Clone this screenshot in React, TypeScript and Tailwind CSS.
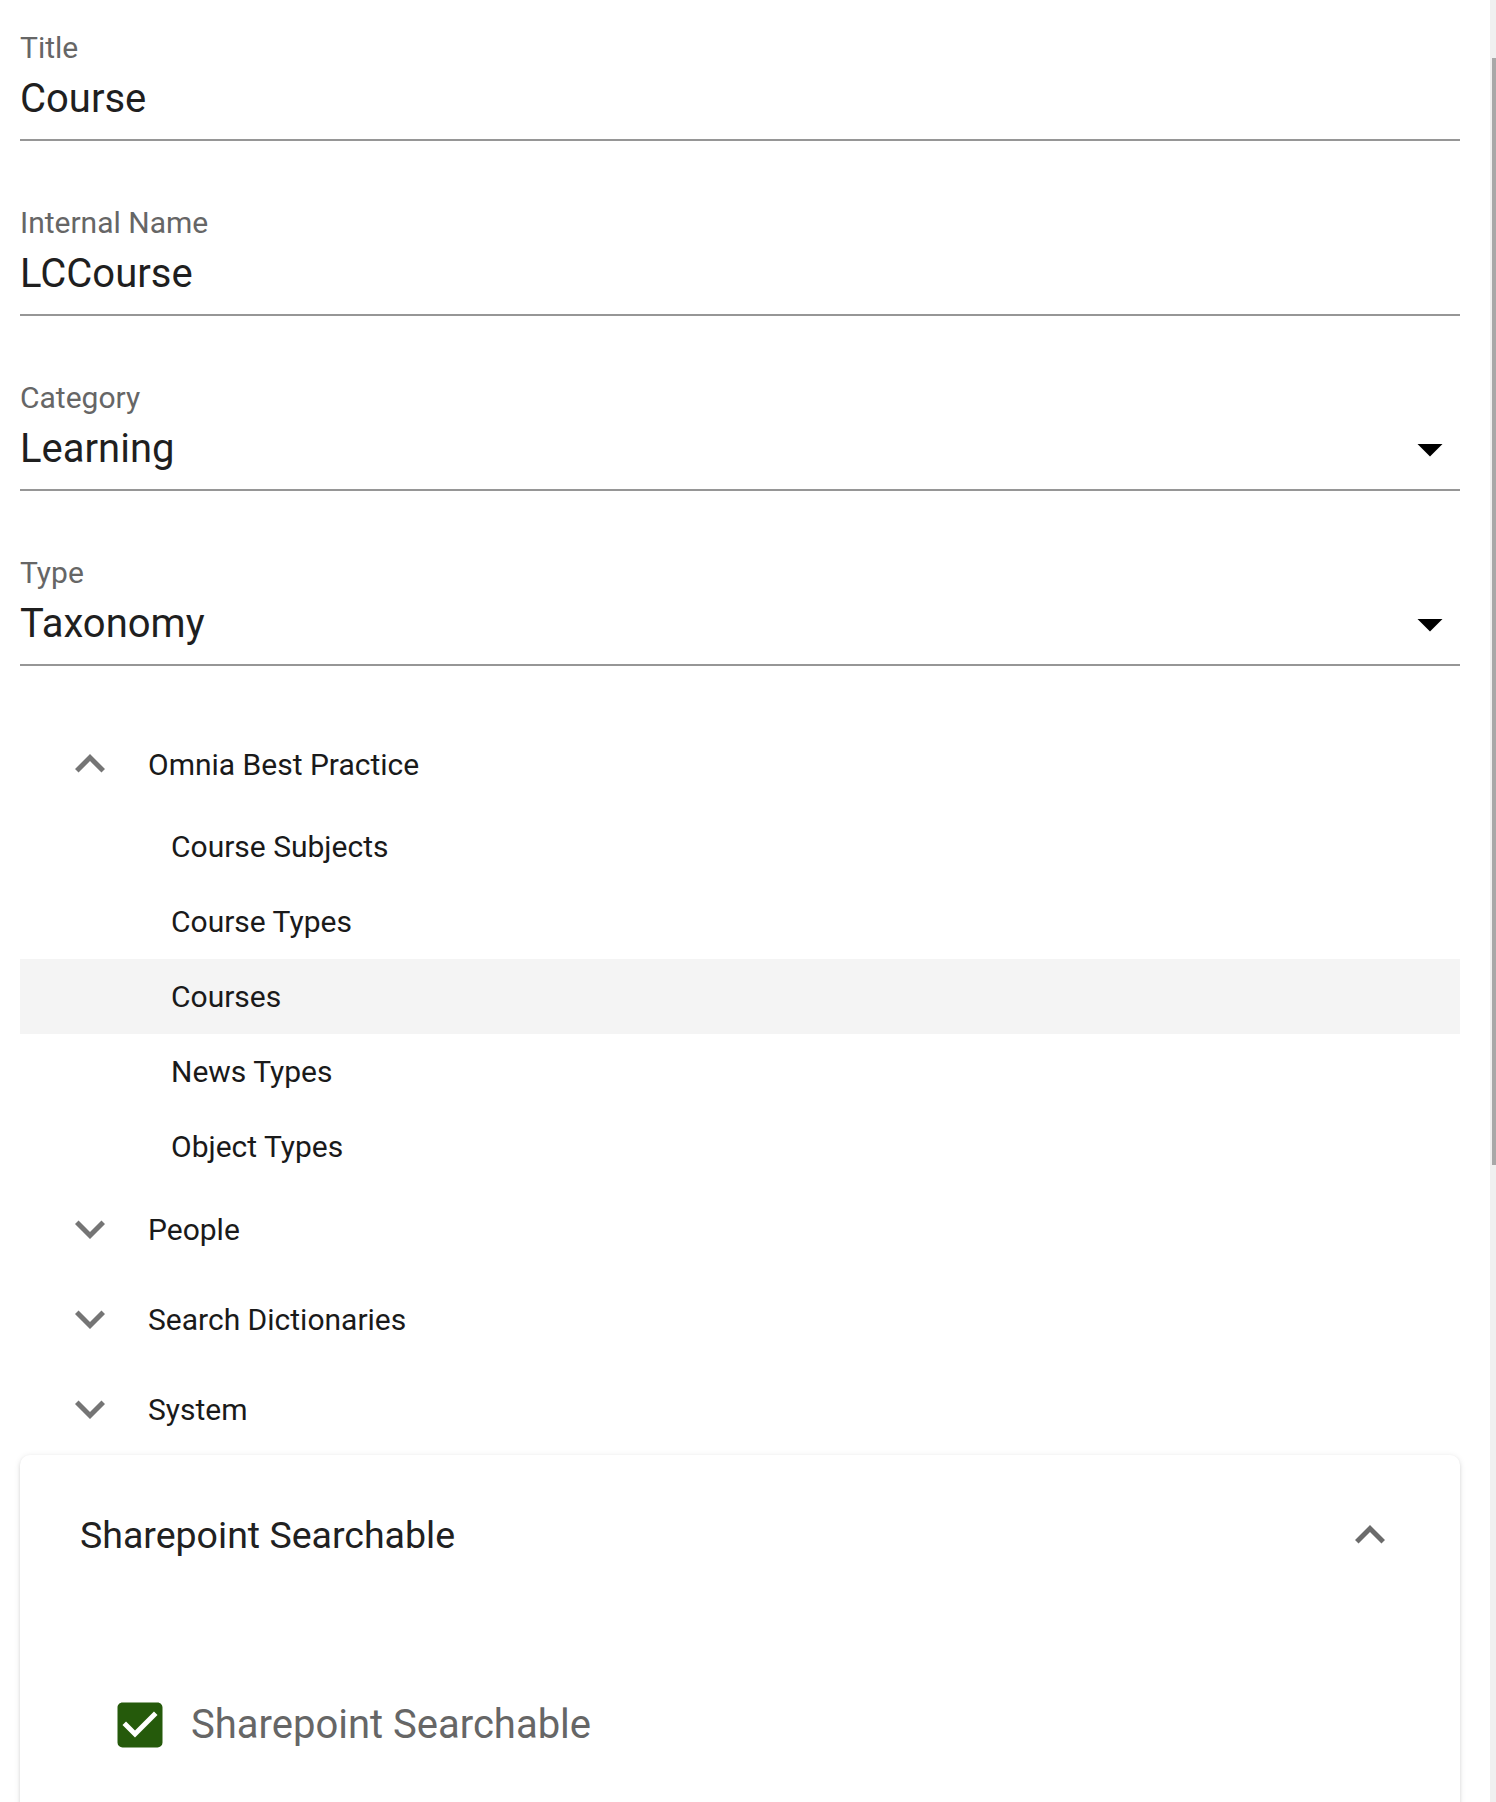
import React from "react";

const CHEVRON_UP = "M7.41,15.41L12,10.83L16.59,15.41L18,14L12,8L6,14L7.41,15.41Z";
const CHEVRON_DOWN = "M7.41,8.58L12,13.17L16.59,8.58L18,10L12,16L6,10L7.41,8.58Z";
const MENU_DOWN = "M7,10L12,15L17,10H7Z";
const CHECKBOX =
  "M10,17L5,12L6.41,10.58L10,14.17L17.59,6.58L19,8M19,3H5C3.89,3 3,3.89 3,5V19A2,2 0 0,0 5,21H19A2,2 0 0,0 21,19V5C21,3.89 20.1,3 19,3Z";

function Icon({ d, color, className }: { d: string; color: string; className?: string }) {
  return (
    <svg viewBox="0 0 24 24" width={60} height={60} className={className}>
      <path d={d} fill={color} />
    </svg>
  );
}

function Field({ label, value, select }: { label: string; value: string; select?: boolean }) {
  return (
    <div className="h-[175px] pt-[30px] flex flex-col">
      <div className="h-[36px] leading-[36px] text-[30px] text-[#666666]">{label}</div>
      <div className="mt-[9px] h-[48px] flex items-center justify-between">
        <span className="leading-[48px] text-[40px] text-[#1f1f1f]">{value}</span>
        {select && <Icon d={MENU_DOWN} color="#000000" className="shrink-0" />}
      </div>
      <div className="mt-[16px] h-[2px] bg-[#969696]" />
    </div>
  );
}

function ParentRow({ label, open }: { label: string; open?: boolean }) {
  return (
    <div className="h-[90px] flex items-center pl-[40px]">
      <Icon d={open ? CHEVRON_UP : CHEVRON_DOWN} color="#757575" className="shrink-0" />
      <span className="ml-[28px] text-[30px] text-[#1a1a1a]">{label}</span>
    </div>
  );
}

function ChildRow({ label, active }: { label: string; active?: boolean }) {
  return (
    <div className={"h-[75px] flex items-center pl-[151px] " + (active ? "bg-[#f4f4f4]" : "")}>
      <span className="text-[30px] text-[#1a1a1a]">{label}</span>
    </div>
  );
}

export default function App() {
  return (
    <div
      className="w-[1496px] h-[1802px] overflow-hidden bg-white flex"
      style={{ fontFamily: "Roboto, 'Noto Sans', sans-serif" }}
    >
      <div className="w-[1490px] pl-[20px] pr-[30px]">
        <Field label="Title" value="Course" />
        <Field label="Internal Name" value="LCCourse" />
        <Field label="Category" value="Learning" select />
        <Field label="Type" value="Taxonomy" select />

        <div className="mt-[19px]">
          <ParentRow label="Omnia Best Practice" open />
          <ChildRow label="Course Subjects" />
          <ChildRow label="Course Types" />
          <ChildRow label="Courses" active />
          <ChildRow label="News Types" />
          <ChildRow label="Object Types" />
          <ParentRow label="People" />
          <ParentRow label="Search Dictionaries" />
          <ParentRow label="System" />
        </div>

        <div className="mt-[1px] rounded-[10px] bg-white h-[400px] shadow-[0_2px_4px_-1px_rgba(0,0,0,0.14),0_1px_6px_0_rgba(0,0,0,0.1)]">
          <div className="h-[160px] flex items-center justify-between pl-[60px] pr-[60px]">
            <span className="text-[37.5px] text-[#212121]">Sharepoint Searchable</span>
            <Icon d={CHEVRON_UP} color="#6b6b6b" />
          </div>
          <div className="mt-[80px] flex items-center pl-[90px] h-[60px]">
            <Icon d={CHECKBOX} color="#255a0b" />
            <span className="ml-[21px] text-[40px] text-[#666666]">Sharepoint Searchable</span>
          </div>
        </div>
      </div>
      <div className="w-[6px] bg-[#f0f0f0]">
        <div className="ml-[2px] mt-[58px] h-[1107px] bg-[#a8a8a8]" />
      </div>
    </div>
  );
}
